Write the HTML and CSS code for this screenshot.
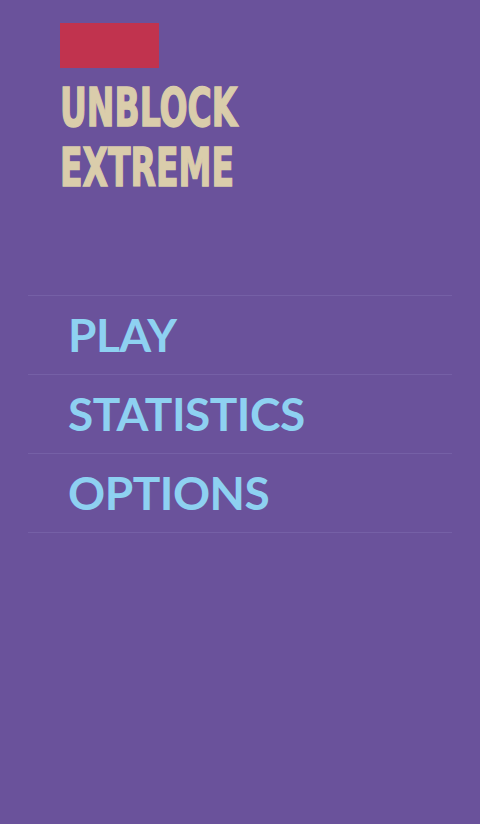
FILE: index.html
```html
<!DOCTYPE html>
<html lang="en">
<head>
  <meta charset="UTF-8">
  <title>Unblock Extreme</title>
  <link rel="stylesheet" href="styles.css">
</head>
<body>

<header class="logo">
  <div class="logo-block"></div>
  <h1 class="title">
    <span>UNBLOCK</span>
    <span>EXTREME</span>
  </h1>
</header>

<nav class="menu">
  <a class="menu-item" href="#">PLAY</a>
  <a class="menu-item" href="#">STATISTICS</a>
  <a class="menu-item" href="#">OPTIONS</a>
</nav>

</body>
</html>
```

FILE: styles.css
```css
    body {
      margin: 0;
      background: #6a529b;
      height: 824px;
      overflow: hidden;
    }
    .logo {
      padding: 23px 0 0 60px;
    }
    .logo-block {
      width: 99px;
      height: 45px;
      background: #c1334e;
    }
    .title {
      margin: 0;
      padding-top: 10px;
      font-family: "DejaVu Sans", sans-serif;
      font-stretch: condensed;
      font-weight: bold;
      font-size: 54px;
      line-height: 60px;
      color: #dacdab;
      -webkit-text-stroke: 1.5px #dacdab;
      transform: scaleX(0.68);
      transform-origin: left top;
    }
    .title span {
      display: block;
    }
    .menu {
      margin: 97px 28px 0;
      border-top: 1px solid #7560a6;
      display: flex;
      flex-direction: column;
    }
    .menu-item {
      display: block;
      height: 78px;
      padding-left: 40px;
      border-bottom: 1px solid #7560a6;
      font-family: Lato, sans-serif;
      font-weight: bold;
      font-size: 46px;
      letter-spacing: -0.5px;
      line-height: 78px;
      color: #8ed1f1;
      text-decoration: none;
    }
```
